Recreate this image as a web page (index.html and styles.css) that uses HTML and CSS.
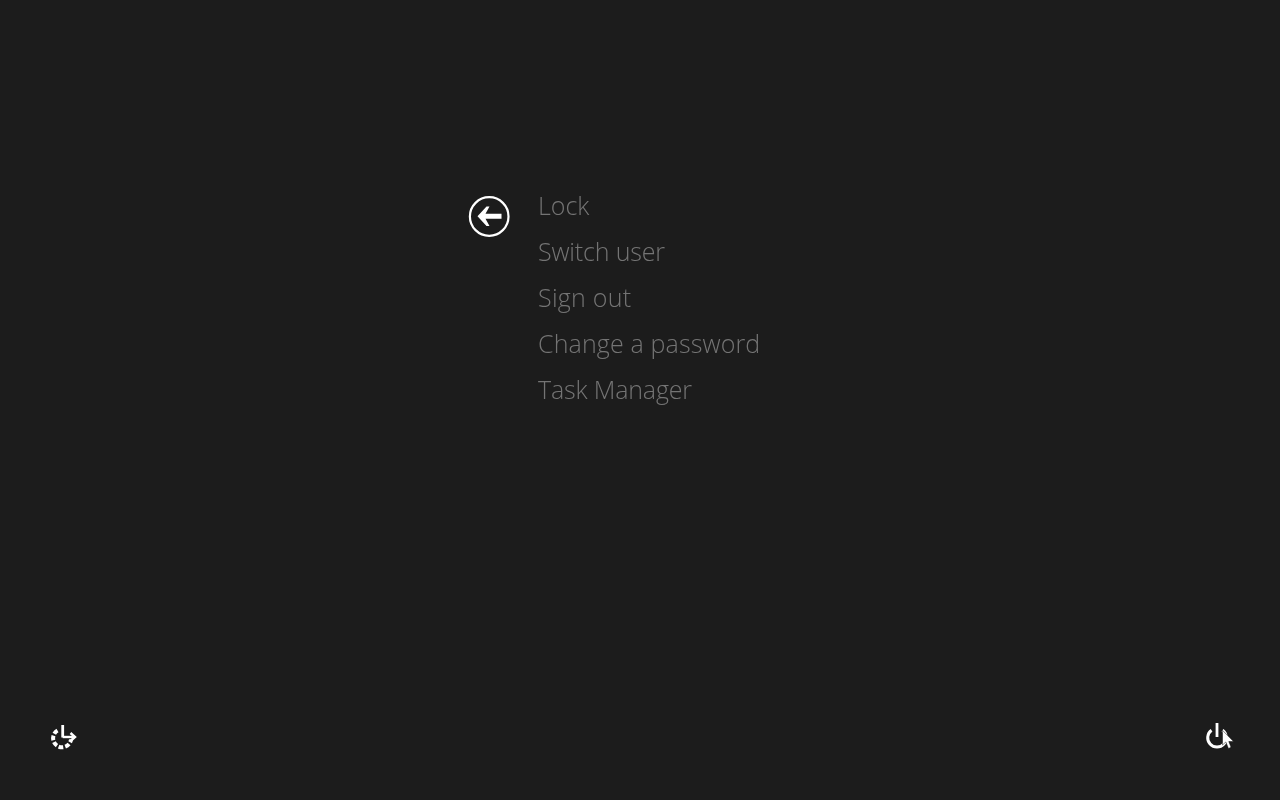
FILE: index.html
```html
<!DOCTYPE html>
<html lang="en">
<head>
<meta charset="utf-8">
<title>Security options</title>
<link rel="stylesheet" href="styles.css">
</head>
<body>
<main class="screen">
  <section class="options">
    <button class="back" aria-label="Back">
      <svg width="42" height="42" viewBox="0 0 42 42">
        <circle cx="21.200" cy="21.500" r="19.300" fill="none" stroke="#fff" stroke-width="2.200"/>
        <path d="M18.500 11.500 L21.500 11.500 L17.500 18.800 L33.500 18.800 L33.500 23.700 L17.500 23.700 L21.500 31 L18.500 31 L9.500 21.200 Z" fill="#fff"/>
      </svg>
    </button>
    <ul class="menu">
      <li>Lock</li>
      <li class="tighter">Switch user</li>
      <li class="wider">Sign out</li>
      <li class="wide">Change a password</li>
      <li class="tighter">Task Manager</li>
    </ul>
  </section>
  <footer class="bar">
    <button class="icon" aria-label="Ease of access">
      <svg width="28" height="28" viewBox="0 0 28 28">
        <path d="M7.500 8.500 A9 9 0 1 0 21 17.500" fill="none" stroke="#fff" stroke-width="4" stroke-dasharray="4.600 2"/>
        <path d="M12.700 3 V15.500" fill="none" stroke="#fff" stroke-width="2.800"/>
        <path d="M12.700 15 H24" fill="none" stroke="#fff" stroke-width="2.400"/>
        <path d="M20.500 11 L25 15 L20.500 19" fill="none" stroke="#fff" stroke-width="2.400"/>
      </svg>
    </button>
    <div class="power">
      <button class="icon" aria-label="Power">
        <svg width="28" height="28" viewBox="0 0 28 28">
          <path d="M8.500 8.250 A9.300 9.300 0 1 0 19.500 8.250" fill="none" stroke="#fff" stroke-width="3"/>
          <path d="M14 1 V15" fill="none" stroke="#fff" stroke-width="2.800"/>
        </svg>
      </button>
      <svg class="cursor" width="12" height="20" viewBox="0 0 12 20">
        <path d="M0.500 0.300 V15 L3.800 12 L6.500 18.500 L9 17.300 L6.800 11.500 L11.500 11.500 Z" fill="#fff" stroke="#111" stroke-width="0.500"/>
      </svg>
    </div>
  </footer>
</main>
</body>
</html>
```
FILE: styles.css
```css
* { box-sizing: border-box; }
html, body { margin: 0; height: 100%; }
body { background: #1c1c1c; font-family: "Open Sans", "Liberation Sans", sans-serif; overflow: hidden; }
.screen { height: 800px; display: flex; flex-direction: column; justify-content: space-between; padding: 182px 47px 48px 48px; }
.options { display: flex; align-items: flex-start; margin-left: 420px; }
.back { width: 42px; height: 42px; margin-top: 13px; padding: 0; border: 0; background: none; display: block; }
.back svg, .icon svg { display: block; }
.menu { list-style: none; margin: 0 0 0 28px; padding: 0; opacity: 0.96; will-change: opacity; }
.menu li { height: 46px; line-height: 46px; font-size: 25px; font-weight: 300; color: #787878; white-space: nowrap; }
.menu .wide { letter-spacing: 0.14px; }
.menu .wider { letter-spacing: 0.25px; }
.menu .tighter { letter-spacing: -0.17px; }
.bar { display: flex; justify-content: space-between; align-items: center; height: 32px; }
.icon { width: 32px; height: 32px; padding: 2px; border: 0; background: none; display: block; }
.power { position: relative; }
.cursor { position: absolute; left: 21px; top: 10px; }
```
